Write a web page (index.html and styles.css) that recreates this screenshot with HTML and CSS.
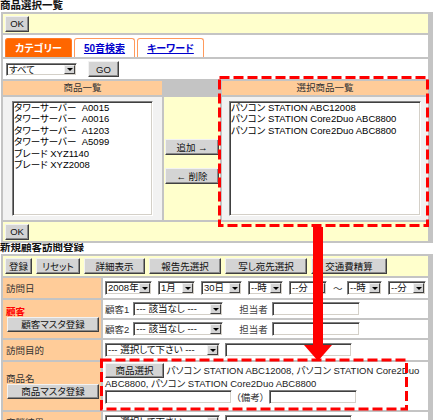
FILE: index.html
```html
<!DOCTYPE html>
<html lang="ja">
<head>
<meta charset="utf-8">
<title>商品選択一覧</title>
<link rel="stylesheet" href="styles.css">
</head>
<body>
<div class="page">
  <div class="title"><span>商品選択一覧</span></div>
  <div class="box top">
    <div class="row yellow okrow"><span class="btn w-ok">OK</span></div>
    <div class="row white tabrow">
      <span class="tab tab-active">カテゴリー</span>
      <span class="tab tab-kana"><a>50音検索</a></span>
      <span class="tab tab-kw"><a>キーワード</a></span>
    </div>
    <div class="row white selrow">
      <span class="sel sunken w-all"><span class="sel-text">すべて</span><span class="sel-arrow"></span></span>
      <span class="btn w-go">GO</span>
    </div>
    <div class="picker">
      <div class="phead">商品一覧</div>
      <div class="phead phead-blank"></div>
      <div class="phead">選択商品一覧</div>
      <div class="pcell">
        <div class="listbox sunken listbox-left">
          <div class="opt">タワーサーバー&nbsp;&nbsp;A0015</div>
          <div class="opt">タワーサーバー&nbsp;&nbsp;A0016</div>
          <div class="opt">タワーサーバー&nbsp;&nbsp;A1203</div>
          <div class="opt">タワーサーバー&nbsp;&nbsp;A5099</div>
          <div class="opt">ブレード XYZ1140</div>
          <div class="opt">ブレード XYZ2008</div>
        </div>
      </div>
      <div class="pcell pcell-mid">
        <span class="btn">追加 →</span>
        <span class="btn">← 削除</span>
      </div>
      <div class="pcell">
        <div class="listbox sunken listbox-right">
          <div class="opt">パソコン STATION ABC12008</div>
          <div class="opt">パソコン STATION Core2Duo ABC8800</div>
          <div class="opt">パソコン STATION Core2Duo ABC8800</div>
        </div>
      </div>
    </div>
    <div class="row yellow okrow"><span class="btn w-ok">OK</span></div>
  </div>

  <div class="title title2"><span>新規顧客訪問登録</span></div>
  <div class="box form">
    <div class="toolbar yellow">
      <span class="btn w-reg">登録</span>
      <span class="btn w-reset">リセット</span>
      <span class="btn w-detail">詳細表示</span>
      <span class="btn w-report">報告先選択</span>
      <span class="btn w-copy">写し宛先選択</span>
      <span class="btn w-fare">交通費精算</span>
    </div>

    <div class="label">訪問日</div>
    <div class="value date">
      <span class="sel sunken w-year"><span class="sel-text">2008年</span><span class="sel-arrow"></span></span>
      <span class="sel sunken w-month"><span class="sel-text">1月</span><span class="sel-arrow"></span></span>
      <span class="sel sunken w-day"><span class="sel-text">30日</span><span class="sel-arrow"></span></span>
      <span class="sel sunken w-hour"><span class="sel-text">--時</span><span class="sel-arrow"></span></span>
      <span class="sel sunken w-min"><span class="sel-text">--分</span><span class="sel-arrow"></span></span>
      <span class="tilde">～</span>
      <span class="sel sunken w-hour"><span class="sel-text">--時</span><span class="sel-arrow"></span></span>
      <span class="sel sunken w-min"><span class="sel-text">--分</span><span class="sel-arrow"></span></span>
    </div>

    <div class="label">
      <span class="label-red">顧客</span>
      <span class="btn w-master">顧客マスタ登録</span>
    </div>
    <div class="value-stack">
      <div class="sub">
        <span>顧客1</span>
        <span class="sel sunken w-cust"><span class="sel-text">--- 該当なし ---</span><span class="sel-arrow"></span></span>
        <span class="staff">担当者</span>
        <span class="input sunken w-staff"></span>
      </div>
      <div class="sub">
        <span>顧客2</span>
        <span class="sel sunken w-cust"><span class="sel-text">--- 該当なし ---</span><span class="sel-arrow"></span></span>
        <span class="staff">担当者</span>
        <span class="input sunken w-staff"></span>
      </div>
    </div>

    <div class="label">訪問目的</div>
    <div class="value">
      <span class="sel sunken w-choose"><span class="sel-text">--- 選択して下さい ---</span><span class="sel-arrow"></span></span>
      <span class="input sunken w-other"></span>
    </div>

    <div class="label">
      <span>商品名</span>
      <span class="btn w-master">商品マスタ登録</span>
    </div>
    <div class="value prod">
      <div class="prod-text"><span class="btn w-prodsel">商品選択</span> パソコン STATION ABC12008, パソコン STATION Core2Duo<br>ABC8800, パソコン STATION Core2Duo ABC8800</div>
      <div class="prod-bottom">
        <span class="input sunken w-p1"></span>
        <span class="note">（備考）</span>
        <span class="input sunken w-p2"></span>
      </div>
    </div>

    <div class="label">商談結果</div>
    <div class="value">
      <span class="sel sunken w-choose"><span class="sel-text">--- 選択して下さい ---</span><span class="sel-arrow"></span></span>
      <span class="input sunken w-other"></span>
    </div>
  </div>

  <svg class="annot" width="435" height="420" viewBox="0 0 435 420" xmlns="http://www.w3.org/2000/svg">
    <rect x="219.5" y="77.5" width="208" height="148" fill="none" stroke="#ff0000" stroke-width="3" stroke-dasharray="10 4"/>
    <rect x="313" y="227" width="10" height="119" fill="#ff0000"/>
    <polygon points="304,345 332,345 318,361" fill="#ff0000"/>
    <rect x="101.5" y="360" width="305" height="49" fill="none" stroke="#ff0000" stroke-width="3" stroke-dasharray="10 4"/>
  </svg>
</div>
</body>
</html>
```

FILE: styles.css
```css
* { box-sizing: border-box; }

html, body {
  margin: 0;
  padding: 0;
  background: #ffffff;
}

body {
  font-family: "Liberation Sans", "Noto Sans CJK JP", sans-serif;
  font-size: 9.5px;
  line-height: 11px;
  color: #222;
  font-feature-settings: "palt";
}

.page {
  position: relative;
  width: 435px;
  height: 420px;
  overflow: hidden;
}

/* section titles */
.title {
  height: 12px;
  overflow: hidden;
  font-size: 10.5px;
  font-weight: bold;
  color: #111;
}
.title span {
  display: block;
  line-height: 12px;
  margin-top: -1px;
}
.title2 { height: 11px; }
.title2 span {
  margin-top: -2px;
  line-height: 13px;
}

/* grey framed boxes */
.box {
  margin-left: 1px;
  width: 432px;
  padding: 2px 5px 2px 2px;
  background: #c4c4c4;
}

.top {
  display: flex;
  flex-direction: column;
  gap: 2px;
}

.row {
  display: flex;
  align-items: center;
  padding-left: 2px;
}

.yellow { background: #ffffcc; }
.white { background: #ffffff; }

.okrow { height: 19px; }

.tabrow {
  height: 22px;
  align-items: flex-end;
  gap: 2px;
}

.selrow {
  height: 20px;
  padding-left: 3px;
  gap: 11px;
}

/* tabs */
.tab {
  height: 19px;
  display: flex;
  align-items: center;
  justify-content: center;
  border: 1px solid #ff9a5c;
  border-bottom: 0;
  border-radius: 3px 3px 0 0;
  background: #ffffff;
  font-weight: bold;
  font-size: 10px;
}
.tab a {
  color: #0000cc;
  text-decoration: underline;
}
.tab-active {
  width: 67px;
  background: #ff6600;
  border-color: #ff7a26;
  color: #ffffff;
}
.tab-kana { width: 61px; }
.tab-kw { width: 67px; }

/* picker (three columns) */
.picker {
  display: grid;
  grid-template-columns: 159px 56px 1fr;
  grid-template-rows: 14px 123px;
  gap: 2px;
}
.phead {
  background: #ffcc99;
  text-align: center;
  line-height: 14px;
  color: #333;
}
.phead-blank { background: transparent; }

.pcell {
  background: #f2f2f2;
  display: flex;
  align-items: center;
  justify-content: center;
}
.pcell-mid {
  background: #ffffcc;
  flex-direction: column;
  align-items: stretch;
  gap: 13px;
  padding-top: 6px;
}
.pcell-mid .btn { margin: 0 1px; }

.listbox {
  height: 115px;
  padding: 0 1px;
  line-height: 11.4px;
  color: #000;
  white-space: nowrap;
  overflow: hidden;
}
.listbox-left { width: 141px; }
.listbox-right { width: 192px; }

/* sunken field look */
.sunken {
  background: #ffffff;
  border: 1px solid;
  border-color: #808080 #ffffff #ffffff #808080;
  box-shadow: inset 1px 1px 0 #404040, inset -1px -1px 0 #d4d0c8;
}

/* buttons */
.btn {
  display: inline-flex;
  align-items: center;
  justify-content: center;
  height: 16px;
  padding: 0 3px;
  background: #d4d4d4;
  border: 1px solid;
  border-color: #f2f2f2 #404040 #404040 #f2f2f2;
  box-shadow: inset -1px -1px 0 #8a8a8a;
  color: #111;
  white-space: nowrap;
  flex: none;
}
.w-ok { width: 24px; }
.w-go { width: 31px; }
.w-reg { width: 27px; }
.w-reset { width: 44px; }
.w-detail { width: 61px; }
.w-report { width: 72px; }
.w-copy { width: 82px; }
.w-fare { width: 76px; }
.w-master { width: 92px; height: 15px; margin-left: 1px; }
.w-prodsel { width: 59px; height: 15px; }

/* selects */
.sel {
  display: inline-flex;
  align-items: stretch;
  height: 14px;
  padding: 1px;
  flex: none;
}
.sel-text {
  flex: 1;
  padding-left: 1px;
  line-height: 10px;
  white-space: nowrap;
  overflow: hidden;
  color: #111;
}
.sel-arrow {
  width: 11px;
  flex: none;
  display: flex;
  align-items: center;
  justify-content: center;
  background: #d4d4d4;
  border: 1px solid;
  border-color: #f2f2f2 #404040 #404040 #f2f2f2;
}
.sel-arrow::after {
  content: "";
  border-top: 3px solid #000;
  border-left: 3px solid transparent;
  border-right: 3px solid transparent;
}
.w-all { width: 71px; height: 13px; }
.w-year { width: 47px; }
.w-month { width: 37px; }
.w-day { width: 41px; }
.w-hour { width: 35px; }
.w-min { width: 38px; }
.w-cust { width: 90px; }
.w-choose { width: 115px; }

/* inputs */
.input {
  display: inline-block;
  height: 14px;
  flex: none;
}
.w-staff { width: 88px; }
.w-other { width: 127px; }
.w-p1 { width: 127px; }
.w-p2 { width: 88px; }

/* registration form */
.form {
  display: grid;
  grid-template-columns: 98px 1fr;
  grid-template-rows: 20px 20px 38px 20px 48px 20px;
  gap: 2px;
}
.toolbar {
  grid-column: 1 / -1;
  display: flex;
  align-items: center;
  gap: 4px;
  padding-left: 2px;
}
.label {
  background: #ffcc99;
  display: flex;
  flex-direction: column;
  justify-content: center;
  align-items: flex-start;
  padding-left: 3px;
  color: #333;
}
.label-red {
  color: #ff0000;
  font-weight: bold;
}
.value {
  background: #ffffff;
  display: flex;
  align-items: center;
  gap: 5px;
  padding-left: 2px;
}
.date { gap: 6px; }
.tilde { width: 8px; color: #333; }

.value-stack {
  display: flex;
  flex-direction: column;
  gap: 2px;
}
.sub {
  background: #ffffff;
  height: 18px;
  display: flex;
  align-items: center;
  gap: 4px;
  padding-left: 2px;
  color: #333;
}
.staff {
  margin-left: 12px;
  color: #444;
}

.prod {
  flex-direction: column;
  align-items: flex-start;
  justify-content: flex-start;
  gap: 1px;
  padding-top: 1px;
}
.prod-text {
  white-space: nowrap;
  line-height: 11px;
  color: #222;
}
.prod-bottom {
  display: flex;
  align-items: center;
  gap: 4px;
}
.note { color: #333; }

/* annotation overlay */
.annot {
  position: absolute;
  left: 0;
  top: 0;
  pointer-events: none;
}
```
